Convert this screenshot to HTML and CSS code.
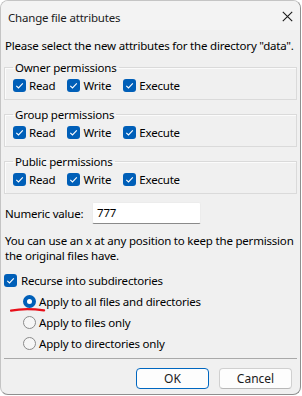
FILE: index.html
```html
<!DOCTYPE html>
<html lang="en">
<head>
    <meta charset="UTF-8">
    <meta name="viewport" content="width=device-width, initial-scale=1.0">
    <title>Change file attributes</title>
    <link rel="stylesheet" href="styles.css">
</head>
<body>
    <div class="window">
        <div class="titlebar">
            <span class="title">Change file attributes</span>
            <svg class="close" width="11" height="11" viewBox="0 0 11 11">
                <path d="M0.8 0.8 L10.2 10.2 M10.2 0.8 L0.8 10.2" stroke="#1a1a1a" stroke-width="1.1" fill="none"/>
            </svg>
        </div>

        <div class="content">
            <p class="intro">Please select the new attributes for the directory "data".</p>

            <fieldset class="group">
                <legend>Owner permissions</legend>
                <div class="perm-row">
                    <label class="perm"><span class="check"></span>Read</label>
                    <label class="perm"><span class="check"></span>Write</label>
                    <label class="perm"><span class="check"></span>Execute</label>
                </div>
            </fieldset>

            <fieldset class="group">
                <legend>Group permissions</legend>
                <div class="perm-row">
                    <label class="perm"><span class="check"></span>Read</label>
                    <label class="perm"><span class="check"></span>Write</label>
                    <label class="perm"><span class="check"></span>Execute</label>
                </div>
            </fieldset>

            <fieldset class="group">
                <legend>Public permissions</legend>
                <div class="perm-row">
                    <label class="perm"><span class="check"></span>Read</label>
                    <label class="perm"><span class="check"></span>Write</label>
                    <label class="perm"><span class="check"></span>Execute</label>
                </div>
            </fieldset>

            <div class="numeric">
                <span class="numeric-label">Numeric value:</span>
                <div class="numeric-input">777</div>
            </div>

            <p class="hint">You can use an x at any position to keep the permission the original files have.</p>

            <label class="recurse"><span class="check"></span>Recurse into subdirectories</label>

            <div class="radios">
                <label class="radio-row">
                    <span class="radio selected"></span>Apply to all files and directories
                    <svg class="scribble" width="36" height="6" viewBox="0 0 36 6">
                        <path d="M1 3.6 C 10 1.8, 22 1.6, 34 3.4" stroke="#e8101a" stroke-width="2.4" stroke-linecap="round" fill="none"/>
                    </svg>
                </label>
                <label class="radio-row"><span class="radio"></span>Apply to files only</label>
                <label class="radio-row"><span class="radio"></span>Apply to directories only</label>
            </div>

            <div class="separator"></div>

            <div class="buttons">
                <button class="btn btn-default">OK</button>
                <button class="btn">Cancel</button>
            </div>
        </div>
    </div>
</body>
</html>
```

FILE: styles.css
```css
body {
    margin: 0;
    background: #ffffff;
    font-family: 'Noto Sans', 'Open Sans', sans-serif;
    font-size: 11.5px;
    letter-spacing: -0.2px;
    color: #000;
}
.window {
    width: 299px;
    height: 393px;
    background: #f0f0f0;
    border: 1px solid #c4c4c4;
    border-right-color: #8f8f8f;
    border-bottom-color: #8f8f8f;
    border-radius: 8px;
    overflow: hidden;
}
.titlebar {
    height: 29px;
    background: #f3f3f3;
    display: flex;
    align-items: center;
    justify-content: space-between;
    padding: 0 7px 0 7px;
}
.title {
    color: #1b1b1b;
    font-size: 11.5px;
    line-height: 15px;
    margin-top: 3px;
}
.close {
    margin-right: 0;
    margin-top: 2px;
}
.content {
    padding: 0 3px;
}
.intro {
    margin: 8px 0 0 1px;
    line-height: 15px;
    white-space: nowrap;
}
.group {
    margin: 7px 0 0 0;
    padding: 0 0 6px 8px;
    border: 1px solid #dadada;
    box-shadow: inset 1px 1px 0 #fbfbfb;
    min-width: 0;
}
.group legend {
    padding: 0 2px;
    line-height: 15px;
}
.perm-row {
    display: flex;
    margin-top: 2px;
    height: 16px;
    align-items: center;
}
.perm {
    display: flex;
    align-items: center;
    margin-right: 12px;
}
.check {
    width: 13px;
    height: 13px;
    border-radius: 3px;
    background: #005fb8;
    margin-right: 3px;
    display: inline-block;
    flex: none;
    background-image: url("data:image/svg+xml,%3Csvg xmlns='http://www.w3.org/2000/svg' width='13' height='13' viewBox='0 0 13 13'%3E%3Cpath d='M3.3 6.8 L5.5 9 L9.8 4.4' stroke='white' stroke-width='1.1' fill='none'/%3E%3C/svg%3E");
}
.numeric {
    display: flex;
    align-items: center;
    margin-top: 8px;
}
.numeric-label {
    margin-left: 1px;
    width: 87px;
}
.numeric-input {
    width: 103px;
    height: 20px;
    background: #ffffff;
    border: 1px solid #ececec;
    border-bottom-color: #8a8a8a;
    border-radius: 2px;
    padding-left: 4px;
    line-height: 20px;
}
.hint {
    margin: 9px 0 0 1px;
    line-height: 15px;
    width: 292px;
}
.recurse {
    display: flex;
    align-items: center;
    height: 16px;
    margin-top: 9px;
}
.recurse .check {
    margin-right: 4px;
}
.radios {
    margin-top: 3px;
    padding-left: 19px;
}
.radio-row {
    display: flex;
    align-items: center;
    height: 21px;
    position: relative;
}
.radio {
    width: 11px;
    height: 11px;
    border-radius: 50%;
    border: 1px solid #8a8a8a;
    background: #f6f6f6;
    margin-right: 3px;
    flex: none;
}
.radio.selected {
    width: 5px;
    height: 5px;
    border: 4px solid #005fb8;
    background: #ffffff;
}
.scribble {
    position: absolute;
    left: -13px;
    top: 16px;
}
.separator {
    height: 1px;
    background: #a9a9a9;
    margin-top: 4px;
}
.buttons {
    display: flex;
    justify-content: flex-end;
    gap: 10px;
    margin-top: 9px;
    padding-right: 5px;
}
.btn {
    width: 73px;
    height: 21px;
    font-family: inherit;
    font-size: 12px;
    letter-spacing: 0;
    color: #1b1b1b;
    background: #fdfdfd;
    border: 1px solid #d0d0d0;
    border-bottom-color: #b8b8b8;
    border-radius: 4px;
    padding: 0;
}
.btn-default {
    border: 1px solid #0067c0;
}
```
